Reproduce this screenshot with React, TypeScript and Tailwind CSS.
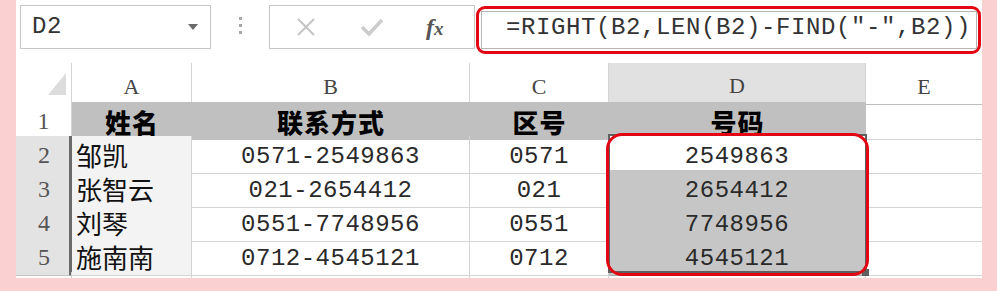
import React from "react";

const rows = [
  { n: "2", name: "邹凯", tel: "0571-2549863", area: "0571", num: "2549863" },
  { n: "3", name: "张智云", tel: "021-2654412", area: "021", num: "2654412" },
  { n: "4", name: "刘琴", tel: "0551-7748956", area: "0551", num: "7748956" },
  { n: "5", name: "施南南", tel: "0712-4545121", area: "0712", num: "4545121" },
];

export default function App() {
  const grid = "grid grid-cols-[56px_120px_278px_139px_257px_116px]";
  return (
    <div className="w-[997px] h-[291px] bg-[#fbd0d1] pl-[16px] pr-[15px] pb-[13px] overflow-hidden">
      <div className="relative h-[278px] bg-white flex flex-col">
        {/* toolbar */}
        <div className="h-[63px] flex items-start shrink-0">
          <div className="ml-[4px] mt-[5px] w-[191px] h-[44px] border border-[#c6c6c6] flex items-center justify-between pl-[11px] pr-[12px]">
            <span className="font-['Liberation_Mono',monospace] text-[24px] text-[#333] tracking-[0.5px] leading-none">D2</span>
            <span className="w-0 h-0 border-l-[5px] border-r-[5px] border-t-[6px] border-l-transparent border-r-transparent border-t-[#6a6a6a]" />
          </div>
          <div className="w-[58px] h-[63px] flex flex-col items-center pt-[17px] gap-[4px]">
            <span className="w-[3px] h-[3px] bg-[#a8a8a8]" />
            <span className="w-[3px] h-[3px] bg-[#a8a8a8]" />
            <span className="w-[3px] h-[3px] bg-[#a8a8a8]" />
          </div>
          <div className="mt-[5px] w-[206px] h-[44px] border border-[#c6c6c6] flex items-center">
            <svg className="ml-[26px]" width="20" height="20" viewBox="0 0 20 20">
              <path d="M2 2 L18 18 M18 2 L2 18" stroke="#c4c4c4" strokeWidth="2" fill="none" />
            </svg>
            <svg className="ml-[44px]" width="24" height="20" viewBox="0 0 24 20">
              <path d="M2 10 L9 17 L22 3" stroke="#cccccc" strokeWidth="3.5" fill="none" />
            </svg>
            <span className="ml-[42px] font-['Liberation_Serif',serif] italic font-bold text-[24px] text-[#555] leading-none">
              f<span className="text-[19px]">x</span>
            </span>
          </div>
          <div className="ml-[1px] mt-[6px] w-[505px] h-[48px] border-[3px] border-[#e30613] rounded-[9px] p-[2px] pr-[1px]">
            <div className="h-full border border-[#b5b5b5] flex items-center pl-[24px] pb-[5px]">
              <span className="font-['Liberation_Mono',monospace] text-[24px] text-[#333] tracking-[0.6px] leading-none whitespace-nowrap">
                =RIGHT(B2,LEN(B2)-FIND(″-″,B2))
              </span>
            </div>
          </div>
        </div>

        {/* column header */}
        <div className={`${grid} h-[39px] shrink-0`}>
          <div className="relative border-r border-[#d4d4d4]">
            <svg className="absolute left-[32px] top-[10px]" width="18" height="22" viewBox="0 0 18 22">
              <polygon points="18,0 18,22 0,22" fill="#dcdcdc" />
            </svg>
          </div>
          {["A", "B", "C"].map((c) => (
            <div key={c} className="border-r border-[#d4d4d4] border-b border-b-[#bdbdbd] flex items-center justify-center pt-[6px] font-['Liberation_Serif',serif] text-[22px] text-[#444]">
              {c}
            </div>
          ))}
          <div className="bg-[#e1e1e1] border-r border-[#d4d4d4] border-b-[3px] border-b-[#6a6a6a] flex items-center justify-center pt-[6px] font-['Liberation_Serif',serif] text-[22px] text-[#444]">
            D
          </div>
          <div className="border-b border-[#bdbdbd] flex items-center justify-center pt-[6px] font-['Liberation_Serif',serif] text-[22px] text-[#444]">
            E
          </div>
        </div>

        {/* row 1 */}
        <div className={`${grid} h-[34px] shrink-0`}>
          <div className="border-r border-[#d4d4d4] border-b border-b-[#d4d4d4] flex items-center justify-center pt-[1px] font-['Liberation_Serif',serif] text-[24px] text-[#555]">
            1
          </div>
          {["姓名", "联系方式", "区号", "号码"].map((t) => (
            <div key={t} className="bg-[#c0c0c0] flex items-center justify-center font-['Noto_Sans_CJK_SC',sans-serif] font-black text-[26px] tracking-[1px] text-black leading-none pt-[2px]">
              {t}
            </div>
          ))}
          <div className="border-b border-[#d4d4d4]" />
        </div>

        {/* data rows */}
        {rows.map((r, i) => (
          <div key={r.n} className={`${grid} h-[34px] shrink-0`}>
            <div className="bg-[#e3e3e3] border-r-[3px] border-r-[#6a6a6a] border-b border-b-[#c4c4c4] flex items-center justify-center pt-[1px] pl-[3px] font-['Liberation_Serif',serif] text-[24px] text-[#555]">
              {r.n}
            </div>
            <div className="bg-[#f3f3f3] border-r border-[#d4d4d4] border-b border-b-[#d4d4d4] flex items-center pl-[4px] pt-[1px] font-['Noto_Sans_CJK_SC',sans-serif] text-[26px] text-[#111] leading-none">
              {r.name}
            </div>
            <div className="border-r border-[#d4d4d4] border-b border-b-[#d4d4d4] flex items-center justify-center pt-[4px] font-['Liberation_Mono',monospace] text-[24px] tracking-[0.5px] text-[#2a2a2a] leading-none">
              {r.tel}
            </div>
            <div className="border-r border-[#d4d4d4] border-b border-b-[#d4d4d4] flex items-center justify-center pt-[4px] font-['Liberation_Mono',monospace] text-[24px] tracking-[0.5px] text-[#2a2a2a] leading-none">
              {r.area}
            </div>
            <div className={`${i === 0 ? "bg-white border-b-[#d4d4d4]" : "bg-[#c6c6c6] border-b-[#a9a9a9]"} border-r border-[#d4d4d4] border-b flex items-center justify-center pt-[4px] font-['Liberation_Mono',monospace] text-[24px] tracking-[0.5px] text-[#2a2a2a] leading-none`}>
              {r.num}
            </div>
            <div className="border-b border-[#d4d4d4]" />
          </div>
        ))}

        {/* bottom partial row */}
        <div className={`${grid} flex-1`}>
          <div className="border-r border-[#d4d4d4]" />
          <div className="border-r border-[#d4d4d4]" />
          <div className="border-r border-[#d4d4d4]" />
          <div className="border-r border-[#d4d4d4]" />
          <div className="border-r border-[#d4d4d4]" />
          <div />
        </div>

        {/* selection outline */}
        <div className="absolute left-[592px] top-[134px] w-[259px] h-[139px] border-2 border-[#5f5f5f] pointer-events-none" />
        <div className="absolute left-[846px] top-[269px] w-[7px] h-[7px] bg-[#5f5f5f]" />
        {/* red highlight */}
        <div className="absolute left-[590px] top-[133px] w-[263px] h-[143px] border-[3px] border-[#e30613] rounded-[16px] pointer-events-none" />
      </div>
    </div>
  );
}
